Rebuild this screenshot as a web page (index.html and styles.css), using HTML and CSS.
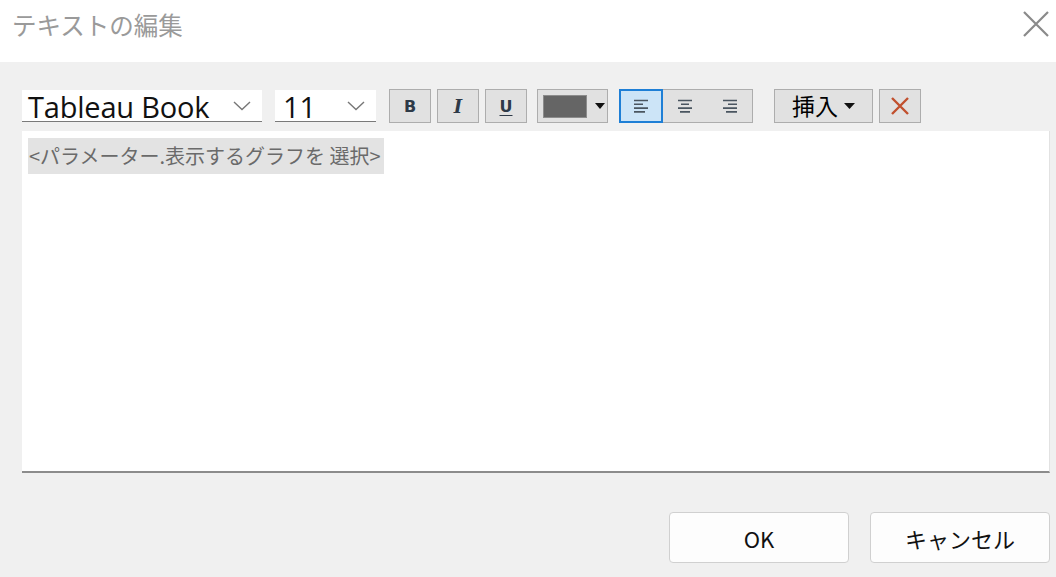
FILE: index.html
```html
<!DOCTYPE html>
<html lang="ja">
<head>
<meta charset="utf-8">
<title>テキストの編集</title>
<link rel="stylesheet" href="styles.css">
</head>
<body>
<div class="dialog">
  <div class="titlebar">
    <div class="title">テキストの編集</div>
    <div class="close">
      <svg width="28" height="28" viewBox="0 0 28 28"><path d="M2 2L26 26M26 2L2 26" stroke="#8a8a8a" stroke-width="2.2" fill="none"/></svg>
    </div>
  </div>
  <div class="content">
    <div class="toolbar">
      <div class="select font-select">
        <span class="sel-text">Tableau Book</span>
        <svg class="chev" width="18" height="10" viewBox="0 0 18 10"><path d="M1 1L9 8.5L17 1" stroke="#777" stroke-width="1.4" fill="none"/></svg>
      </div>
      <div class="select size-select">
        <span class="sel-text">11</span>
        <svg class="chev" width="18" height="10" viewBox="0 0 18 10"><path d="M1 1L9 8.5L17 1" stroke="#777" stroke-width="1.4" fill="none"/></svg>
      </div>
      <div class="btn fmt b-btn">B</div>
      <div class="btn fmt i-btn">I</div>
      <div class="btn fmt u-btn">U</div>
      <div class="btn color-btn">
        <span class="swatch"></span>
        <svg width="10" height="6" viewBox="0 0 10 6"><path d="M0 0H10L5 6Z" fill="#111"/></svg>
      </div>
      <div class="align-group">
        <div class="align-btn active">
          <svg width="16" height="14" viewBox="0 0 16 14"><g stroke="#4a5560" stroke-width="1.6"><path d="M1 1.5H15M1 5.3H10M1 9.1H15M1 12.9H12"/></g></svg>
        </div>
        <div class="align-btn">
          <svg width="16" height="14" viewBox="0 0 16 14"><g stroke="#4a5560" stroke-width="1.6"><path d="M1 1.5H15M4 5.3H12M1 9.1H15M3 12.9H13"/></g></svg>
        </div>
        <div class="align-btn">
          <svg width="16" height="14" viewBox="0 0 16 14"><g stroke="#4a5560" stroke-width="1.6"><path d="M1 1.5H15M6 5.3H15M1 9.1H15M4 12.9H15"/></g></svg>
        </div>
      </div>
      <div class="btn insert-btn">
        <span>挿入</span>
        <svg width="11" height="6" viewBox="0 0 11 6"><path d="M0 0H11L5.5 6Z" fill="#111"/></svg>
      </div>
      <div class="btn del-btn">
        <svg width="20" height="20" viewBox="0 0 20 20"><path d="M2 2L18 18M18 2L2 18" stroke="#c1502e" stroke-width="2.4" fill="none"/></svg>
      </div>
    </div>
    <div class="editor">
      <span class="field">&lt;パラメーター.表示するグラフを 選択&gt;</span>
    </div>
    <div class="actions">
      <div class="action-btn">OK</div>
      <div class="action-btn">キャンセル</div>
    </div>
  </div>
</div>
</body>
</html>
```
FILE: styles.css
```css
html, body {
  margin: 0;
  padding: 0;
  background: #f0f0f0;
}
.dialog {
  width: 1056px;
  height: 577px;
  background: #f0f0f0;
  font-family: "Noto Sans CJK JP", "Noto Sans", sans-serif;
  overflow: hidden;
}
.titlebar {
  height: 62px;
  background: #ffffff;
  display: flex;
  align-items: center;
  justify-content: space-between;
}
.title {
  margin-left: 12px;
  margin-top: -14px;
  font-size: 24.5px;
  color: #9a9a9a;
}
.close {
  margin-right: 6px;
  margin-top: -14px;
  display: flex;
}
.content {
  padding: 27px 6px 0 22px;
}
.toolbar {
  display: flex;
  align-items: center;
  height: 34px;
}
.select {
  height: 32px;
  background: #ffffff;
  border-bottom: 1px solid #7a7a7a;
  box-sizing: border-box;
  display: flex;
  align-items: center;
}
.sel-text {
  font-family: "Open Sans", "Noto Sans", sans-serif;
  font-size: 29px;
  letter-spacing: -0.2px;
  color: #111;
  line-height: 1;
  margin-top: 1px;
}
.font-select {
  width: 240px;
  padding-left: 6px;
}
.font-select .chev {
  margin-left: auto;
  margin-right: 11px;
}
.size-select {
  width: 101px;
  margin-left: 13px;
  padding-left: 8px;
}
.size-select .chev {
  margin-left: auto;
  margin-right: 11px;
}
.btn {
  height: 34px;
  box-sizing: border-box;
  background: #e1e1e1;
  border: 1px solid #adadad;
  display: flex;
  align-items: center;
  justify-content: center;
}
.fmt {
  width: 42px;
  font-family: "DejaVu Sans", sans-serif;
  font-weight: bold;
  font-size: 16px;
  color: #2e3a48;
}
.b-btn { margin-left: 13px; }
.i-btn { margin-left: 6px; font-style: italic; font-family: "DejaVu Serif", serif; font-size: 18px; }
.u-btn { margin-left: 6px; text-decoration: underline; text-underline-offset: 3px; }
.color-btn {
  width: 71px;
  margin-left: 10px;
  justify-content: flex-start;
  padding-left: 5px;
}
.swatch {
  width: 44px;
  height: 23px;
  background: #656565;
  border: 1px solid #8c8c8c;
  box-sizing: border-box;
  margin-right: 8px;
}
.align-group {
  margin-left: 11px;
  display: flex;
  height: 34px;
  width: 134px;
  box-sizing: border-box;
  border: 1px solid #adadad;
  background: #e1e1e1;
}
.align-btn {
  flex: 1;
  display: flex;
  align-items: center;
  justify-content: center;
}
.align-btn.active {
  background: #cce4f7;
  border: 2px solid #1e7fd6;
  margin: -1px 0 -1px -1px;
  flex: 0 0 44px;
  box-sizing: border-box;
}
.insert-btn {
  width: 99px;
  margin-left: 21px;
  font-size: 23px;
  color: #000;
  gap: 6px;
}
.insert-btn span { line-height: 1; margin-top: -2px; }
.del-btn {
  width: 42px;
  margin-left: 6px;
}
.editor {
  margin-top: 8px;
  height: 342px;
  background: #ffffff;
  border-bottom: 2px solid #8c8c8c;
  border-right: 1px solid #e2e2e2;
  box-sizing: border-box;
  padding: 7px 0 0 6px;
}
.field {
  display: inline-block;
  background: #e3e3e3;
  color: #6a6a6a;
  font-size: 20px;
  line-height: 36px;
  height: 36px;
  padding: 0 3px 0 1px;
}
.actions {
  display: flex;
  justify-content: flex-end;
  gap: 21px;
  margin-top: 39px;
}
.action-btn {
  width: 180px;
  height: 51px;
  box-sizing: border-box;
  background: #fdfdfd;
  border: 1px solid #d0d0d0;
  border-radius: 4px;
  display: flex;
  align-items: center;
  justify-content: center;
  font-size: 22px;
  color: #111;
}
```
